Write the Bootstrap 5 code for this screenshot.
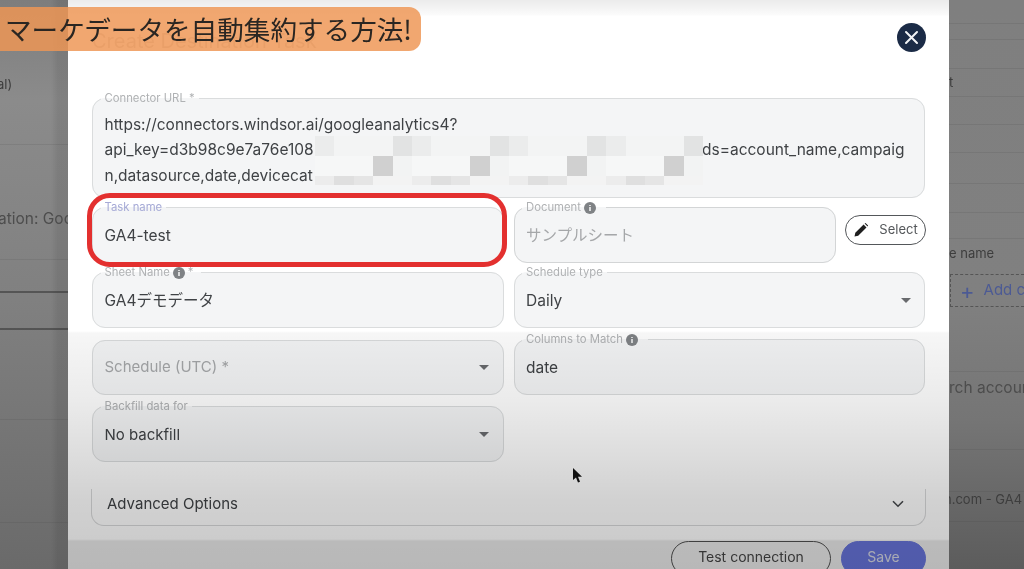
<!doctype html>
<html lang="ja"><head><meta charset="utf-8"><title>Create Destination Task</title>
<link href="https://cdn.jsdelivr.net/npm/bootstrap@5.3.0/dist/css/bootstrap.min.css" rel="stylesheet">
<style>
html,body{height:100%;overflow:hidden;margin:0}
body{font-family:Inter,"Noto Sans CJK JP","Liberation Sans",sans-serif;color:#3f4245;background:#777}
.stage{position:relative;width:1024px;height:569px;overflow:hidden}
.side-l,.side-r{overflow:hidden;font-size:13px;color:#3d3d3d;white-space:nowrap;filter:blur(.5px)}
.side-l{width:68px;background:linear-gradient(90deg,rgba(0,0,0,0) 75%,rgba(0,0,0,.08) 85%,rgba(0,0,0,.08) 100%),linear-gradient(180deg,#7d7d7d 0,#8b8b8b 100px,#808080 300px,#6a6a6a 569px)}
.side-r{width:75px;background:linear-gradient(180deg,#7f7f7f 0,#808080 300px,#757575 420px,#5c5c5c 569px)}
.sr{display:flex;align-items:center;border-bottom:1px solid rgba(60,60,60,.12)}
.sr.dark{border-bottom:2px solid rgba(50,50,50,.55)}
.sr.none{border-bottom:0}
.h24{height:24px}.h16{height:16px}.h26{height:26px}.h28{height:28px}.h29{height:29px}.h30{height:30px}.h31{height:31px}.h33{height:33px}.h35{height:35px}.h37{height:37px}.h50{height:50px}.h59{height:59px}.h60{height:60px}.h65{height:65px}.h90{height:90px}.h103{height:103px}.h47{height:47px}.h42{height:42px}.h14{height:14px}
.cut-a{margin-left:-2px}.cut-b{margin-left:-3px}.cut-c{margin-left:-5px}
.big{font-size:15.5px;color:#4d4d4d}
.add-box{display:flex;align-items:center;height:33px;border:1px dashed #555;border-right:0;gap:9px;padding-left:9px;color:#4c5a94;font-size:15px;margin:5px 0 0 1px}
.plus{font-size:22px;line-height:1}
.panel{position:relative;width:881px;height:569px;background:#fff;padding:23px 24px 0;overflow:hidden;filter:blur(.3px)}
.shade{position:absolute;left:0;right:0;top:0;bottom:0;pointer-events:none;background:linear-gradient(180deg,rgba(0,0,0,.08) 0,rgba(0,0,0,.015) 15px,rgba(0,0,0,0) 16px,rgba(0,0,0,0) 331px,rgba(0,0,0,.035) 333px,rgba(0,0,0,.08) 400px,rgba(0,0,0,.18) 500px,rgba(0,0,0,.2) 539px,rgba(0,0,0,.27) 541px,rgba(0,0,0,.28) 569px)}
.head{height:29px;margin-bottom:39.5px}
.head-title{font-size:20px;line-height:29px;font-weight:400;color:#cfcfcf;margin:4px 0 0}
.close-dot{width:29px;height:29px;border-radius:50%;background:#1b2b46;border:0;padding:0;margin-right:-1px;display:flex;align-items:center;justify-content:center}
.fld{display:flex;align-items:center;height:61.5px;background:#f4f5f6;border:1.5px solid #dadcdd;border-radius:13px;padding:0 11.5px 5px;font-size:15.5px;line-height:25.5px;min-width:0;width:100%}
.fld legend{float:none;width:auto;margin:0 0 0 -4px;padding:0 4px;font-size:11.3px;line-height:13px;color:#b0b2b4;display:flex;align-items:center;gap:3px}
.fld.dk{border-color:#d3d5d6}
.fld.url{height:106px;display:block;padding:7px 11.5px 0}
.fld.url .ln{display:flex;justify-content:space-between;white-space:nowrap}
.ln-end{padding-right:8px}
.fld.plain{height:55px;padding-bottom:0;font-size:15px}
.fld.fs15{font-size:15px}
.fld .inner{display:flex;justify-content:space-between;align-items:center;width:100%}
.ph{color:#a5a7a9}
.caret-d{width:0;height:0;border-left:5px solid transparent;border-right:5px solid transparent;border-top:5px solid #686a6d;margin-right:2px}
.rowx{--bs-gutter-x:10px;--bs-gutter-y:0}
.m35{margin-top:3.5px}.m55{margin-top:5.5px}
.end-cell{align-self:flex-end}
.ico-i{width:12px;height:12px;flex:none}
.doc-wrap{gap:9px}
.sel-btn{--bs-btn-padding-x:0;--bs-btn-padding-y:0;--bs-btn-font-size:13px;--bs-btn-border-width:1.5px;--bs-btn-border-color:#54575a;--bs-btn-color:#54575a;width:81px;height:30px;flex:none;margin:13.5px -1px 0 0;display:flex;align-items:center;justify-content:center;gap:10px;background:#fff;border-radius:15px}
.mark-red{position:absolute;left:0;right:1.5px;top:-8px;bottom:-4px;border:5px solid #e3302f;border-radius:23px;pointer-events:none}
.t-blue legend{color:#a6aad6}
.adv{height:37px;margin:27px -1px 0;padding:0 21px 5px 15px;display:flex;align-items:center;justify-content:space-between;border:1.5px solid #d8d9da;border-top:0;border-radius:0 0 13px 13px;font-size:15px;font-weight:400;color:#3f4245}
.foot{margin-top:15px;gap:10px;margin-right:-1px}
.bt-t,.bt-s{--bs-btn-padding-y:0;--bs-btn-font-size:14px;height:35px;padding-bottom:4px;display:flex;align-items:center;justify-content:center}
.bt-t{--bs-btn-border-width:1.5px;--bs-btn-border-color:#565656;--bs-btn-color:#4a4a4a;width:160px;background:transparent}
.bt-s{--bs-btn-color:#e8eaf8;--bs-btn-bg:#6f7dec;--bs-btn-border-color:#6f7dec;width:85px}
.caption{position:absolute;left:0;top:7px;width:421px;height:44px;background:rgba(238,150,85,.84);border-radius:0 12px 12px 0;display:flex;align-items:center;padding-left:5px;font-family:"Noto Sans CJK JP",sans-serif;font-size:26.6px;font-weight:400;color:#2a2622;white-space:nowrap;filter:blur(.3px)}
.mosaic{position:absolute;left:315px;top:136px;width:388px;pointer-events:none}
.mrow{display:flex}
.mrow i{flex:1 1 0;display:block}
.mr1 i{height:20px;background:#f3f4f4}.mr1 i:nth-child(5n+1){background:#ebecec}.mr1 i:nth-child(5n){background:#e2e3e3}
.mr2 i{height:20px;background:#f6f7f7}.mr2 i:nth-child(5n+4){background:#d0d0d0}.mr2 i:nth-child(5n){background:#f2f3f3}
.mr3 i{height:9px;background:#f3f3f3}.mr3 i:nth-child(5n+1){background:#ececec}.mr3 i:nth-child(5n+2){background:#dfdfdf}.mr3 i:nth-child(5n+3){background:#e5e5e5}
.cursor{position:absolute;left:572px;top:467px;width:11px;height:17px;filter:blur(.4px)}
</style></head><body>
<div class="stage d-flex">
  <aside class="side-l">
    <div class="sr none h60"></div>
    <div class="sr none h50 cut-b">al)</div>
    <div class="sr h35"></div>
    <div class="sr none h59"></div>
    <div class="sr none h30 big cut-a">ation: Google</div>
    <div class="sr h26"></div>
    <div class="sr dark h33"></div>
    <div class="sr dark h37"></div>
    <div class="sr h90"></div>
    <div class="sr h103"></div>
  </aside>
  <main class="panel">
    <header class="head d-flex justify-content-between align-items-start">
      <h1 class="head-title">Create Destination Task</h1>
      <button class="close-dot" type="button" aria-label="Close"><svg width="15" height="15" viewBox="0 0 15 15"><path d="M2 2 13 13M13 2 2 13" stroke="#f2f4f6" stroke-width="2" stroke-linecap="round"/></svg></button>
    </header>
    <fieldset class="fld url">
      <legend>Connector URL *</legend>
      <div class="ln">https://connectors.windsor.ai/googleanalytics4?</div>
      <div class="ln ln-end"><span>api_key=d3b98c9e7a76e108</span><span>ds=account_name,campaig</span></div>
      <div class="ln">n,datasource,date,devicecat</div>
    </fieldset>
    <div class="row rowx m35">
      <div class="col-6 position-relative">
        <fieldset class="fld t-blue"><legend>Task name</legend>GA4-test</fieldset>
        <div class="mark-red"></div>
      </div>
      <div class="col-6 d-flex doc-wrap">
        <fieldset class="fld dk"><legend>Document <svg class="ico-i" viewBox="0 0 12 12"><circle cx="6" cy="6" r="6" fill="#7f8285"/><path d="M6 5v4M6 3v1" stroke="#fff" stroke-width="1.4"/></svg>&nbsp;</legend><span class="ph">サンプルシート</span></fieldset>
        <button class="btn sel-btn" type="button"><svg width="16" height="16" viewBox="0 0 16 16"><path d="M1.5 14.5 2.3 10.8 10.6 2.5 13.5 5.4 5.2 13.7ZM11.6 1.5 12.5 .9 15.1 3.5 14.5 4.4Z" fill="#1f1f1f"/></svg>Select</button>
      </div>
    </div>
    <div class="row rowx m35">
      <div class="col-6"><fieldset class="fld"><legend>Sheet Name <svg class="ico-i" viewBox="0 0 12 12"><circle cx="6" cy="6" r="6" fill="#7f8285"/><path d="M6 5v4M6 3v1" stroke="#fff" stroke-width="1.4"/></svg> *&nbsp;</legend>GA4デモデータ</fieldset></div>
      <div class="col-6"><fieldset class="fld"><legend>Schedule type</legend><div class="inner"><span>Daily</span><span class="caret-d"></span></div></fieldset></div>
    </div>
    <div class="row rowx m55">
      <div class="col-6 end-cell"><fieldset class="fld plain"><div class="inner"><span class="ph">Schedule (UTC) *</span><span class="caret-d"></span></div></fieldset></div>
      <div class="col-6"><fieldset class="fld"><legend>Columns to Match <svg class="ico-i" viewBox="0 0 12 12"><circle cx="6" cy="6" r="6" fill="#7f8285"/><path d="M6 5v4M6 3v1" stroke="#fff" stroke-width="1.4"/></svg>&nbsp;</legend>date</fieldset></div>
    </div>
    <div class="row rowx m55">
      <div class="col-6"><fieldset class="fld fs15"><legend>Backfill data for</legend><div class="inner"><span>No backfill</span><span class="caret-d"></span></div></fieldset></div>
    </div>
    <div class="adv"><span>Advanced Options</span><svg width="12" height="8" viewBox="0 0 12 8"><path d="M1 1.2 6 6.2 11 1.2" fill="none" stroke="#45484b" stroke-width="1.6"/></svg></div>
    <div class="d-flex justify-content-end foot">
      <button class="btn rounded-pill bt-t" type="button">Test connection</button>
      <button class="btn rounded-pill bt-s" type="button">Save</button>
    </div>
    <div class="shade"></div>
  </main>
  <aside class="side-r">
    <div class="sr h24"></div>
    <div class="sr h16"></div>
    <div class="sr h29"></div>
    <div class="sr h28">t</div>
    <div class="sr h28"></div>
    <div class="sr h28"></div>
    <div class="sr h31"></div>
    <div class="sr h29"></div>
    <div class="sr h26"></div>
    <div class="sr none h30">e name</div>
    <div class="add-box"><span class="plus">+</span><span>Add custom</span></div>
    <div class="sr h65"></div>
    <div class="sr none h31 big">rch account</div>
    <div class="sr h47"></div>
    <div class="sr h42"></div>
    <div class="sr none h16 cut-c">n.com - GA4</div>
    <div class="sr h14"></div>
  </aside>
  <div class="mosaic" aria-hidden="true">
    <div class="mrow mr1"><i></i><i></i><i></i><i></i><i></i><i></i><i></i><i></i><i></i><i></i><i></i><i></i><i></i><i></i><i></i><i></i><i></i><i></i><i></i><i></i></div>
    <div class="mrow mr2"><i></i><i></i><i></i><i></i><i></i><i></i><i></i><i></i><i></i><i></i><i></i><i></i><i></i><i></i><i></i><i></i><i></i><i></i><i></i><i></i></div>
    <div class="mrow mr3"><i></i><i></i><i></i><i></i><i></i><i></i><i></i><i></i><i></i><i></i><i></i><i></i><i></i><i></i><i></i><i></i><i></i><i></i><i></i><i></i></div>
  </div>
  <div class="caption">マーケデータを自動集約する方法!</div>
  <svg class="cursor" viewBox="0 0 11 17"><path d="M1 1V13L4 10.4 6 15.5 8 14.7 6 9.8H10Z" fill="#111"/></svg>
</div>
<script src="https://cdn.jsdelivr.net/npm/bootstrap@5.3.0/dist/js/bootstrap.bundle.min.js"></script>
</body></html>
